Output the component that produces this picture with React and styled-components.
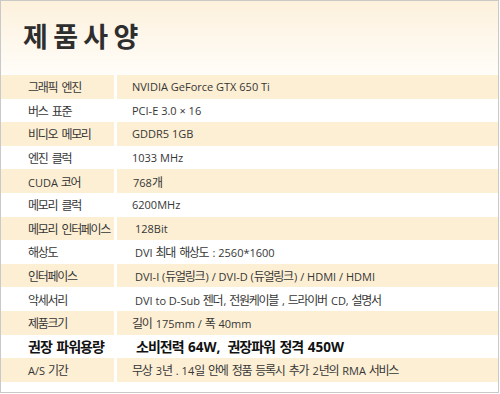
import React from "react";
import styled, { createGlobalStyle } from "styled-components";

const Global = createGlobalStyle`
  html, body { margin: 0; padding: 0; background: #ffffff; }
  body { font-family: "Open Sans", "Noto Sans CJK KR", sans-serif; }
  * { box-sizing: border-box; }
`;

const Frame = styled.div`
  width: 499px;
  height: 393px;
  border: 1px solid #c9c9c9;
  background: #ffffff;
  display: flex;
  flex-direction: column;
`;

const Header = styled.div`
  height: 74px;
  flex: none;
  background: linear-gradient(to bottom, #fdf1dc 0%, #fef8ee 60%, #fffdf9 100%);
  display: flex;
  align-items: center;
  padding-left: 22px;
  padding-bottom: 6px;
`;

const Title = styled.h1`
  margin: 0;
  font-family: "Noto Sans CJK KR", sans-serif;
  font-weight: 700;
  font-size: 27px;
  line-height: 1;
  color: #2e2e2e;
  letter-spacing: -1.4px;
  word-spacing: 2px;
`;

const Table = styled.div`
  display: flex;
  flex-direction: column;
`;

const Row = styled.div`
  height: 23.6px;
  display: grid;
  grid-template-columns: 113px 381px;
  column-gap: 3px;
`;

const Cell = styled.div`
  background: ${(p) => (p.$band ? "#fdefd4" : "#ffffff")};
  display: flex;
  align-items: center;
  padding-left: ${(p) => p.$pad}px;
  font-family: "Open Sans", "Noto Sans CJK KR", sans-serif;
  font-size: ${(p) => (p.$strong ? "13.5px" : "11px")};
  font-weight: ${(p) => (p.$strong ? 700 : 400)};
  color: ${(p) => (p.$strong ? "#111111" : "#363636")};
  overflow: hidden;
`;

const Line = styled.span`
  white-space: pre;
`;

const Ko = styled.span`
  font-family: "Noto Sans CJK KR", sans-serif;
  font-size: ${(p) => (p.$strong ? "14px" : "12px")};
  letter-spacing: ${(p) => (p.$strong ? "-1px" : "-1.3px")};
  margin-right: ${(p) => (p.$strong ? "1px" : "1.3px")};
`;

const HANGUL = /([\uAC00-\uD7A3\u3131-\u318E]+)/;

function Text({ children, strong }) {
  return (
    <Line>
      {children.split(HANGUL).map((part, i) =>
        i % 2 === 1 ? (
          <Ko key={i} $strong={strong}>
            {part}
          </Ko>
        ) : (
          <React.Fragment key={i}>{part}</React.Fragment>
        )
      )}
    </Line>
  );
}

const rows = [
  ["그래픽 엔진", "NVIDIA GeForce GTX 650 Ti", 132],
  ["버스 표준", "PCI-E 3.0 × 16", 132],
  ["비디오 메모리", "GDDR5 1GB", 132],
  ["엔진 클럭", "1033 MHz", 132],
  ["CUDA 코어", "768개", 133],
  ["메모리 클럭", "6200MHz", 132],
  ["메모리 인터페이스", "128Bit", 135],
  ["해상도", "DVI 최대 해상도 : 2560*1600", 135],
  ["인터페이스", "DVI-I (듀얼링크) / DVI-D (듀얼링크) / HDMI / HDMI", 135],
  ["악세서리", "DVI to D-Sub 젠더, 전원케이블 , 드라이버 CD, 설명서", 135],
  ["제품크기", "길이 175mm / 폭 40mm", 132],
  ["권장 파워용량", "소비전력 64W,  권장파워 정격 450W", 136, true],
  ["A/S 기간", "무상 3년 . 14일 안에 정품 등록시 추가 2년의 RMA 서비스", 132],
];

export default function App() {
  return (
    <>
      <Global />
      <Frame>
        <Header>
          <Title>제 품 사 양</Title>
        </Header>
        <Table>
          {rows.map(([label, value, pad, strong], i) => {
            const band = i % 2 === 0;
            return (
              <Row key={label}>
                <Cell $band={band} $pad={27} $strong={strong}>
                  <Text strong={strong}>{label}</Text>
                </Cell>
                <Cell $band={band} $pad={pad - 117} $strong={strong}>
                  <Text strong={strong}>{value}</Text>
                </Cell>
              </Row>
            );
          })}
        </Table>
      </Frame>
    </>
  );
}
